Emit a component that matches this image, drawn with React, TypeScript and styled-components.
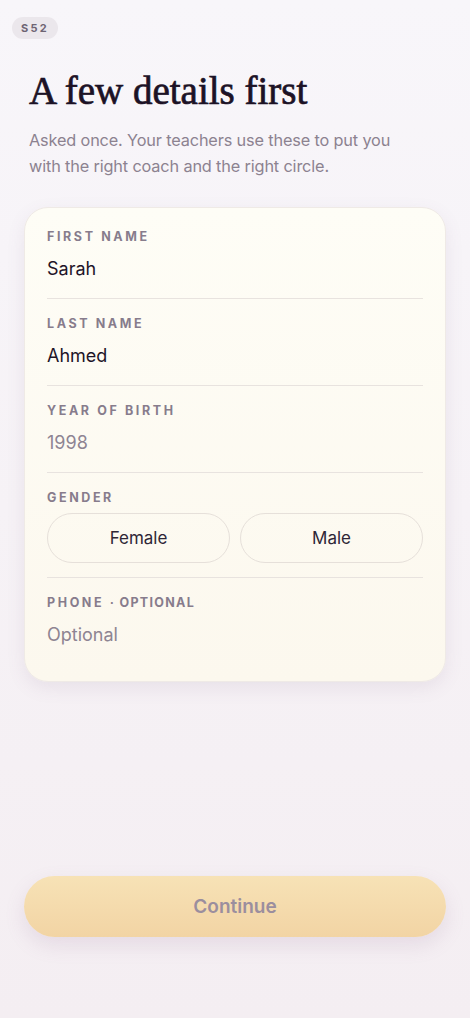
import React from "react";
import styled, { createGlobalStyle } from "styled-components";

const GlobalStyle = createGlobalStyle`
	html, body {
		margin: 0;
		padding: 0;
	}
	body {
		font-family: Inter, "Noto Sans", sans-serif;
		background: linear-gradient(180deg, #f8f6fa 0%, #f4eef2 100%);
		-webkit-font-smoothing: antialiased;
	}
`;

const Screen = styled.div`
	min-height: 1018px;
	box-sizing: border-box;
	display: flex;
	flex-direction: column;
	padding: 17px 24px 81px;
`;

const Badge = styled.div`
	align-self: flex-start;
	margin-left: -12px;
	height: 22px;
	padding: 0 9px;
	border-radius: 11px;
	background: #ebe7ec;
	color: #6e6473;
	font-size: 11px;
	font-weight: 700;
	letter-spacing: 2.2px;
	line-height: 22px;
`;

const Title = styled.h1`
	margin: 30px 0 0 5px;
	font-family: "Liberation Serif", "Times New Roman", serif;
	font-size: 39px;
	font-weight: 400;
	line-height: 44px;
	color: #1c1226;
	-webkit-text-stroke: 0.7px #1c1226;
`;

const Subtitle = styled.p`
	margin: 14px 0 0 5px;
	max-width: 392px;
	font-size: 16.3px;
	letter-spacing: -0.15px;
	line-height: 26px;
	color: #8c8290;
`;

const Card = styled.div`
	margin: 28px 0 0;
	padding: 4px 22px 17px;
	border-radius: 24px;
	background: linear-gradient(180deg, #fefdf6 0%, #fcf8ee 100%);
	border: 1px solid #efeae6;
	box-shadow: 0 6px 18px rgba(120, 90, 130, 0.1);
`;

const Field = styled.div<{ $last?: boolean; $tight?: boolean }>`
	padding: 17px 0 ${p => (p.$tight ? "14px" : "16px")};
	border-bottom: ${p => (p.$last ? "none" : "1px solid #e8e3df")};
`;

const Label = styled.div`
	font-size: 12.5px;
	font-weight: 700;
	letter-spacing: 2.6px;
	line-height: 16px;
	color: #877c8c;
	text-transform: uppercase;
`;

const LabelNote = styled.span`
	letter-spacing: 1.3px;
`;

const Value = styled.div<{ $placeholder?: boolean }>`
	margin-top: 11px;
	font-size: 18px;
	line-height: 26px;
	color: ${p => (p.$placeholder ? "#8e8492" : "#1e1428")};
`;

const Options = styled.div`
	margin-top: 7px;
	display: grid;
	grid-template-columns: 1fr 1fr;
	gap: 10px;
`;

const Option = styled.button`
	height: 50px;
	border-radius: 25px;
	border: 1px solid #e6e0da;
	background: transparent;
	font-family: Inter, "Noto Sans", sans-serif;
	font-size: 17px;
	color: #2e2636;
	cursor: pointer;
`;

const Spacer = styled.div`
	flex: 1;
`;

const ContinueButton = styled.button`
	height: 61px;
	border: none;
	border-radius: 31px;
	background: linear-gradient(180deg, #f7e2b6 0%, #f2d4a4 100%);
	box-shadow: 0 8px 20px rgba(150, 110, 150, 0.16);
	font-family: Inter, "Noto Sans", sans-serif;
	font-size: 19px;
	font-weight: 600;
	color: #9b8e9e;
`;

const fields = [
	{ label: "First name", value: "Sarah" },
	{ label: "Last name", value: "Ahmed" },
	{ label: "Year of birth", value: "1998", placeholder: true }
];

export default function App() {
	return (
		<>
			<GlobalStyle />
			<Screen>
				<Badge>S52</Badge>
				<Title>A few details first</Title>
				<Subtitle>
					Asked once. Your teachers use these to put you with the right coach and the right circle.
				</Subtitle>
				<Card>
					{fields.map(f => (
						<Field key={f.label}>
							<Label>{f.label}</Label>
							<Value $placeholder={f.placeholder}>{f.value}</Value>
						</Field>
					))}
					<Field $tight>
						<Label>Gender</Label>
						<Options>
							<Option>Female</Option>
							<Option>Male</Option>
						</Options>
					</Field>
					<Field $last>
						<Label>
							Phone <LabelNote>· optional</LabelNote>
						</Label>
						<Value $placeholder>Optional</Value>
					</Field>
				</Card>
				<Spacer />
				<ContinueButton disabled>Continue</ContinueButton>
			</Screen>
		</>
	);
}
